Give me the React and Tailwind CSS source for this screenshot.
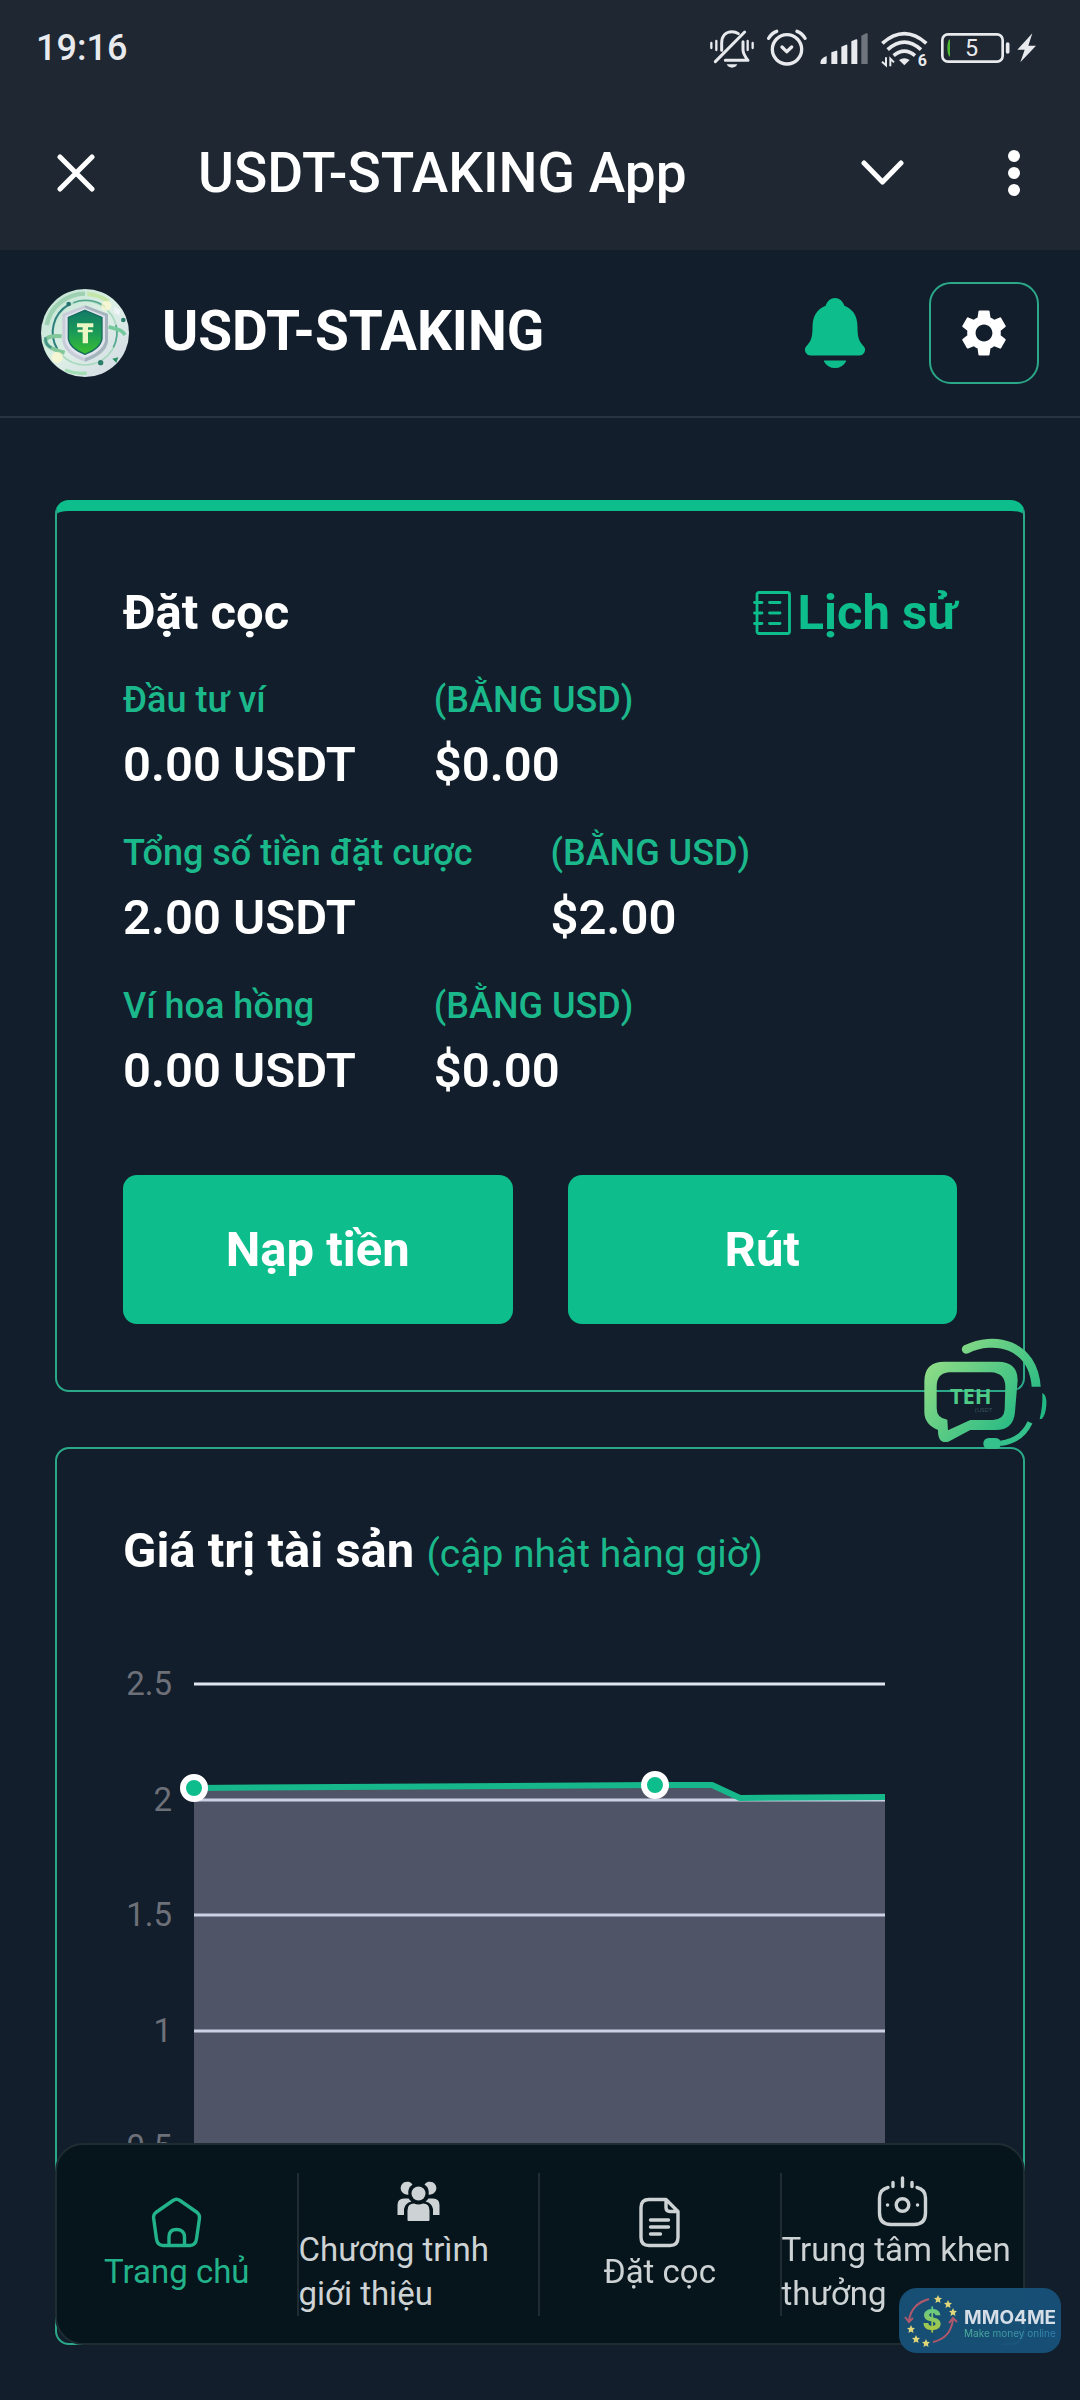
import { IoNotifications } from 'react-icons/io5'
import { MdSettings } from 'react-icons/md'

const BALANCES = [
  { label: 'Đầu tư ví', amount: '0.00 USDT', usd: '$0.00' },
  { label: 'Tổng số tiền đặt cược', amount: '2.00 USDT', usd: '$2.00' },
  { label: 'Ví hoa hồng', amount: '0.00 USDT', usd: '$0.00' },
]

const GRID = [
  { label: '2.5', y: 63 },
  { label: '2', y: 179 },
  { label: '1.5', y: 294 },
  { label: '1', y: 410 },
  { label: '0.5', y: 526 },
  { label: '0', y: 641 },
]

const LINE = '71,167 532,164 589,164 617,177 762,176'

const STARS = [
  [39, 11],
  [49, 16],
  [54, 24],
  [12, 41],
  [17, 51],
  [27, 55],
]

const NAV = [
  { label: 'Trang chủ', Icon: HomeIcon, active: true },
  { label: 'Chương trình giới thiệu', Icon: GroupIcon },
  { label: 'Đặt cọc', Icon: DocumentIcon },
  { label: 'Trung tâm khen thưởng', Icon: RewardIcon },
]

function HomeIcon() {
  return (
    <svg viewBox="0 0 55 55" className="size-[55px]" fill="none" stroke="currentColor" strokeWidth="3.4" strokeLinejoin="round">
      <path d="M24 5.5 6.800 17.500Q4.300 19.500 4.600 23L7.500 44Q8.500 50.300 14 50.500H41Q46.500 50.300 47.500 44L50.500 23Q50.700 19.500 48.200 17.500L31 5.500Q27.500 3 24 5.500Z" />
      <path d="M20 50V42C20 37 23 34.500 27.500 34.500S35.500 37 35.500 42V50" />
    </svg>
  )
}

function GroupIcon() {
  return (
    <svg viewBox="0 0 55 55" className="size-[55px]" fill="currentColor">
      <path d="M21.500 11.500A6.500 6.500 0 1 0 17.500 21.500 10 10 0 0 1 21.500 11.500Z" />
      <path d="M33.500 11.500A6.500 6.500 0 1 1 37.500 21.500 10 10 0 0 0 33.500 11.500Z" />
      <circle cx="27.500" cy="20.500" r="7" />
      <path d="M6.500 42V32Q6.500 25.500 13 25.500H17.500Q19 27.500 20.500 28.500 14 30 13 36V42Z" />
      <path d="M48.500 42V32Q48.500 25.500 42 25.500H37.500Q36 27.500 34.500 28.500 41 30 42 36V42Z" />
      <path d="M16.500 47V37.500Q16.500 30.500 23 30.500 27.500 32.500 32 30.500 38.500 30.500 38.500 37.500V47Q38.500 48 37.500 48H17.500Q16.500 48 16.500 47Z" />
    </svg>
  )
}

function DocumentIcon() {
  return (
    <svg viewBox="0 0 55 55" className="size-[55px]" fill="none" stroke="currentColor" strokeWidth="3.4" strokeLinecap="round" strokeLinejoin="round">
      <path d="M34 4.500H17Q9 4.500 9 12.500V42.500Q9 50.500 17 50.500H38Q46 50.500 46 42.500V16.500L34 4.500V12.500Q34 16.500 38 16.500H46" />
      <path d="M18.500 25H36.500M18.500 32H36.500M18.500 39H28.500" />
    </svg>
  )
}

function RewardIcon() {
  return (
    <svg viewBox="0 0 55 55" className="size-[55px]" fill="none" stroke="currentColor" strokeWidth="3.4" strokeLinecap="round">
      <path d="M13 14.500Q4.500 16.500 4.500 25V40Q4.500 51.500 16 51.500H39Q50.500 51.500 50.500 40V25Q50.500 16.500 42 14.500" />
      <circle cx="27.500" cy="32" r="6.300" />
      <path d="M27.500 5V13.500M18 9.500V13.500M37 9.500V13.500" />
      <path d="M12.500 32H12.600M42.500 32H42.600" />
    </svg>
  )
}

function HistoryIcon() {
  return (
    <svg viewBox="0 0 38 44" className="h-[44px] w-[38px]" fill="none" stroke="currentColor" strokeWidth="2.800" strokeLinecap="round">
      <rect x="4" y="1.500" width="32.500" height="41" rx="2" />
      <path d="M1.500 11.500H9M1.500 22H9M1.500 32.500H9M16.500 11.500H27M16.500 22H27M16.500 32.500H27" />
    </svg>
  )
}

function StatusIcons() {
  return (
    <div className="flex items-center gap-[13px] text-[#e8eaed]">
      <svg viewBox="57 54 132 120" className="h-10 w-11" fill="none" stroke="currentColor" strokeWidth="9" strokeLinecap="round">
        <path d="M161 66 73 155" />
        <path d="M92 121V99C92 78 104 65 123 65Q134 65 142 71" />
        <path d="M156 95V120Q157 134 171 151H103" strokeLinejoin="round" />
        <path d="M107 163H139Q134 173 123 173T107 163Z" fill="currentColor" stroke="none" />
        <path d="M61 99V114M76 93V120M170 93V120M185 99V114" strokeWidth="7" />
      </svg>
      <svg viewBox="233 54 120 120" className="size-10" fill="none" stroke="currentColor" strokeWidth="10" strokeLinecap="round">
        <circle cx="293" cy="118" r="44" />
        <path d="M278 111 292 125 307 111" strokeLinejoin="round" />
        <path d="M238 85Q246 70 262 64M347 85Q339 70 323 64" />
      </svg>
      <svg viewBox="390 54 144 120" className="h-10 w-12" fill="currentColor">
        <path d="M392 162Q388 146 410 138V158Q410 162 406 162ZM424 162V127L438 122Q442 121 442 125V162ZM454 162V110L468 104Q472 103 472 107V162ZM484 162V94L498 88Q502 87 502 91V162Z" />
        <path d="M514 162V77L528 70Q533 69 533 73V162Z" opacity=".4" />
      </svg>
      <svg viewBox="572 54 141 120" className="h-10 w-[47px] overflow-visible" fill="none" stroke="currentColor" strokeWidth="11">
        <path d="M576 100Q642 42 708 100M592 119Q642 74 692 119M610 137Q642 110 674 137" />
        <path d="M626 150Q642 139 658 150L642 166Z" fill="currentColor" stroke="none" />
        <path d="M587 142V166L575 155M600 169V146L611 157" strokeWidth="6" />
        <text x="682" y="169" fill="currentColor" stroke="none" fontSize="48" className="font-['Roboto',sans-serif] font-bold">6</text>
      </svg>
      <svg viewBox="756 54 288 120" className="h-10 w-24" fill="none" stroke="currentColor">
        <rect x="760" y="73" width="181" height="82" rx="17" strokeWidth="8" />
        <path d="M956 102V126" strokeWidth="11" strokeLinecap="round" />
        <path d="M783 87Q775 92 775 114T783 141Z" fill="#4cb82f" stroke="none" />
        <text x="848" y="139" textAnchor="middle" fill="currentColor" stroke="none" fontSize="70" className="font-['Roboto',sans-serif]">5</text>
        <path d="M1030 70 985 119H1007L994 157 1041 107H1018Z" fill="currentColor" stroke="none" />
      </svg>
    </div>
  )
}

function ShieldLogo() {
  return (
    <svg viewBox="33 57 264 264" className="size-[88px]" aria-hidden="true">
      <defs>
        <linearGradient id="coin" x1="0" y1="0" x2="1" y2="1">
          <stop offset="0" stopColor="#bfe3cf" />
          <stop offset=".5" stopColor="#dcefe6" />
          <stop offset="1" stopColor="#d5d9e6" />
        </linearGradient>
        <linearGradient id="shield" x1="0" y1="0" x2="0" y2="1">
          <stop offset="0" stopColor="#127a66" />
          <stop offset=".5" stopColor="#1a9a58" />
          <stop offset="1" stopColor="#3cc030" />
        </linearGradient>
      </defs>
      <circle cx="165" cy="189" r="132" fill="url(#coin)" />
      <g fill="none">
        <path d="M50 165A118 118 0 0 1 165 71" stroke="#9ed0b2" strokeWidth="13" />
        <path d="M172 72A118 118 0 0 1 235 94" stroke="#c4e6a8" strokeWidth="12" />
        <path d="M105 300A125 125 0 0 0 170 309" stroke="#a3dfb5" strokeWidth="10" />
        <circle cx="165" cy="189" r="96" stroke="#a8dabf" strokeWidth="5" />
        <path d="M82 237A96 96 0 0 1 116 104" stroke="#2e7f80" strokeWidth="6" />
        <path d="M130 98A98 98 0 0 1 225 110M258 165A96 96 0 0 1 250 232" stroke="#53a68f" strokeWidth="5" />
        <path d="M95 199C50 195 35 210 56 228C70 240 92 245 104 248" stroke="#81c79a" strokeWidth="12" />
        <path d="M46 202Q46 226 64 233" stroke="#43908a" strokeWidth="7" />
        <path d="M236 170C260 178 275 178 285 195" stroke="#74c99d" strokeWidth="11" />
      </g>
      <circle cx="82" cy="262" r="17" fill="#fbf7cf" opacity=".8" />
      <circle cx="229" cy="107" r="15" fill="#fbf7cf" opacity=".8" />
      <circle cx="116" cy="102" r="7" fill="#28736f" />
      <circle cx="212" cy="278" r="8" fill="#2c7c6b" />
      <circle cx="280" cy="150" r="7" fill="#2c7c6b" />
      <path d="M247 266 265 262 259 278Z" fill="#299261" />
      <path d="M253 110 271 120 268 138 252 128Z" fill="#eef3f6" />
      <path d="M165 106 234 132V214Q228 254 165 275Q103 254 97 214V132Z" fill="#c9cdda" />
      <path d="M165 106 234 132V214Q228 254 165 275" fill="#a5b4bd" />
      <path d="M165 114 225 138V212Q219 244 165 264Q112 244 106 212V138Z" fill="#dfe3ec" />
      <path d="M165 121 216 142V206Q212 235 165 253Q119 235 115 206V142Z" fill="url(#shield)" stroke="#176b5f" strokeWidth="4" />
      <path d="M141 160H190V172H174V179H188V187H174V220H158V187H143V179H158V172H141Z" fill="#eaf7c4" />
    </svg>
  )
}

function ChatButton() {
  return (
    <button type="button" aria-label="Chat" className="absolute -right-[25px] -bottom-[60px] z-10">
      <svg viewBox="130 78 375 339" className="h-[113px] w-[125px]" fill="none">
        <defs>
          <linearGradient id="chat" gradientUnits="userSpaceOnUse" x1="150" y1="150" x2="410" y2="370">
            <stop offset="0" stopColor="#8fdc86" />
            <stop offset="1" stopColor="#22b884" />
          </linearGradient>
        </defs>
        <path d="M260 115C340 75 462 95 470 232" stroke="url(#chat)" strokeWidth="27" strokeLinecap="round" />
        <path d="M403 238 456 227H490V334H410Z" fill="#121e2b" />
        <path d="M488 246Q502 252 500 282T486 324H480Q490 284 488 246Z" fill="url(#chat)" />
        <path d="M451 334Q425 390 362 397" stroke="#35c18b" strokeWidth="16" />
        <rect x="311" y="381" width="53" height="33" rx="16" fill="#35c18b" />
        <path d="M194 152H355Q414 152 414 208L406 302Q402 357 347 357H272L206 392Q174 400 175 357Q134 340 134 302V212Q134 152 194 152ZM208 184Q171 186 171 228V292Q171 322 203 326L205 358 272 327H340Q374 325 375 295L377 226Q376 186 334 184Z" fill="url(#chat)" fillRule="evenodd" />
        <text x="273" y="279" textAnchor="middle" fill="#4fcb88" fontSize="66" className="font-['Open_Sans',sans-serif] font-bold">TEH</text>
        <text x="312" y="304" textAnchor="middle" fill="#3d5a60" fontSize="18" className="font-['Open_Sans',sans-serif]">(USDT</text>
      </svg>
    </button>
  )
}

function AssetChart() {
  return (
    <svg viewBox="0 0 834 656" className="mt-[38px] block h-auto w-full" role="img" aria-label="Giá trị tài sản">
      {GRID.map(({ label, y }) => (
        <g key={label}>
          <path d={`M71 ${y}H762`} stroke="#e0e6f1" strokeWidth="3" />
          <text x="49" y={y + 11} textAnchor="end" fontSize="33" fill="#6e7079">
            {label}
          </text>
        </g>
      ))}
      <polygon points={`71,641 ${LINE} 762,641`} fill="#505467" />
      {GRID.slice(1).map(({ label, y }) => (
        <path key={label} d={`M71 ${y}H762`} stroke="#ccd2e6" strokeWidth="3" />
      ))}
      <polyline points={LINE} fill="none" stroke="#16b88b" strokeWidth="6" strokeLinejoin="round" />
      <circle cx="71" cy="167" r="11" fill="#0dbd8b" stroke="#fff" strokeWidth="6" />
      <circle cx="532" cy="164" r="11" fill="#0dbd8b" stroke="#fff" strokeWidth="6" />
    </svg>
  )
}

function SiteBadge() {
  return (
    <div className="fixed right-[19px] bottom-[47px] z-30 flex h-[65px] w-[162px] items-center rounded-[18px] bg-[#185179]/95">
      <svg viewBox="0 0 62 65" className="h-[65px] w-[62px] shrink-0" fill="none">
        <defs>
          <linearGradient id="dollar" x1="0" y1="0" x2="0" y2="1">
            <stop offset="0" stopColor="#4ccb9b" />
            <stop offset="1" stopColor="#c3c62c" />
          </linearGradient>
        </defs>
        <path d="M30 11Q12 16 10 33M6 29 10 34 14 30" stroke="#b0586c" strokeWidth="2" />
        <path d="M34 54Q52 50 54 31M50 35 54 30 58 34" stroke="#b0586c" strokeWidth="2" />
        {STARS.map(([x, y]) => (
          <path key={`${x}-${y}`} transform={`translate(${x} ${y})`} d="M0-4 1.200-1.200 4-1 1.900 1 2.500 4 0 2.400-2.500 4-1.900 1-4-1-1.200-1.200Z" fill="#e0d77a" />
        ))}
        <text x="33" y="42" textAnchor="middle" fontSize="29" fill="url(#dollar)" className="font-['Inter',sans-serif] font-extrabold">$</text>
      </svg>
      <div className="pt-[6px] pl-[3px] font-['Inter',sans-serif] whitespace-nowrap">
        <p className="text-[19px] leading-[19px] font-bold text-[#d5dde6]">MMO4ME</p>
        <p className="bg-linear-to-r from-[#4fb59c] to-[#2f7fb0] bg-clip-text text-[10px] leading-3 text-transparent">Make money online</p>
      </div>
    </div>
  )
}

export default function App() {
  return (
    <div className="min-h-screen bg-[#121e2b] pb-[55px] font-['Roboto',sans-serif] text-white">
      <div className="bg-[#1e2732]">
        <div className="flex h-24 items-center justify-between pr-[43px] pl-[36px]">
          <span className="text-[36px] font-medium text-[#e8eaed]">19:16</span>
          <StatusIcons />
        </div>
        <div className="flex h-[154px] items-center pr-[60px] pl-[57px]">
          <button type="button" aria-label="Đóng">
            <svg viewBox="0 0 38 38" className="size-[38px]" stroke="currentColor" strokeWidth="5" strokeLinecap="round">
              <path d="M3 3 35 35M35 3 3 35" />
            </svg>
          </button>
          <p className="ml-[103px] flex-1 text-[55px] font-medium">USDT-STAKING App</p>
          <button type="button" aria-label="Thu gọn">
            <svg viewBox="0 0 43 26" className="h-[26px] w-[43px]" fill="none" stroke="currentColor" strokeWidth="5" strokeLinecap="round" strokeLinejoin="round">
              <path d="M3 3 21.500 22 40 3" />
            </svg>
          </button>
          <button type="button" aria-label="Thêm" className="ml-[104px]">
            <svg viewBox="0 0 12 46" className="h-[46px] w-3" fill="currentColor">
              <circle cx="6" cy="6" r="6" />
              <circle cx="6" cy="23" r="6" />
              <circle cx="6" cy="40" r="6" />
            </svg>
          </button>
        </div>
      </div>

      <header className="flex h-[168px] items-center border-b-2 border-[#293442] px-[41px]">
        <ShieldLogo />
        <h1 className="ml-[33px] flex-1 pb-1 text-[55px] font-bold">USDT-STAKING</h1>
        <button type="button" aria-label="Thông báo" className="text-[#0dbd8b]">
          <IoNotifications className="size-20" />
        </button>
        <button type="button" aria-label="Cài đặt" className="ml-[54px] flex h-[102px] w-[110px] items-center justify-center rounded-[22px] border-2 border-[#2aa888]">
          <MdSettings className="size-14" />
        </button>
      </header>

      <main className="px-[55px] pt-[82px]">
        <section className="relative rounded-[14px] border-2 border-t-[11px] border-[#2aa888] border-t-[#0dbd8b] px-[66px] pt-[70px] pb-[66px]">
          <div className="flex items-center justify-between text-[49px] leading-[64px] font-bold">
            <h2>Đặt cọc</h2>
            <a href="#history" className="flex items-center gap-[6px] text-[#0dbd8b]">
              <HistoryIcon />
              Lịch sử
            </a>
          </div>
          <div className="mt-[27px] flex flex-col gap-6">
            {BALANCES.map(({ label, amount, usd }) => (
              <div key={label} className="flex gap-[78px] font-medium">
                <div>
                  <p className="text-[36px] leading-[56px] text-[#1bb88b]">{label}</p>
                  <p className="text-[49px] leading-[73px] font-semibold">{amount}</p>
                </div>
                <div>
                  <p className="text-[36px] leading-[56px] text-[#1bb88b]">(BẰNG USD)</p>
                  <p className="text-[49px] leading-[73px] font-semibold">{usd}</p>
                </div>
              </div>
            ))}
          </div>
          <div className="mt-[68px] grid grid-cols-2 gap-[55px]">
            <button type="button" className="h-[149px] rounded-[14px] bg-[#0dbd8b] text-[49px] font-bold">Nạp tiền</button>
            <button type="button" className="h-[149px] rounded-[14px] bg-[#0dbd8b] text-[49px] font-bold">Rút</button>
          </div>
          <ChatButton />
        </section>

        <section className="mt-[55px] rounded-[14px] border-2 border-[#2aa888] px-[66px] pt-[70px] pb-[66px]">
          <h2 className="text-[49px] leading-[64px] font-bold">
            Giá trị tài sản <span className="text-[39px] leading-none font-normal text-[#1bb88b]">(cập nhật hàng giờ)</span>
          </h2>
          <AssetChart />
        </section>
      </main>

      <nav className="fixed inset-x-[55px] bottom-[55px] z-20 grid grid-cols-4 rounded-[28px] border-2 border-[#1f2d33] bg-[#06151b] pt-7 pb-[27px] text-[33px] leading-[44px] text-[#cdd2d4]">
        {NAV.map(({ label, Icon, active }) => (
          <a
            key={label}
            href="#nav"
            className={`flex min-h-[143px] flex-col items-center justify-center border-[#1f2d33] not-last:border-r-2 ${
              active ? 'text-[#22b38b]' : ''
            }`}
          >
            <Icon />
            <span>{label}</span>
          </a>
        ))}
      </nav>

      <SiteBadge />
    </div>
  )
}
